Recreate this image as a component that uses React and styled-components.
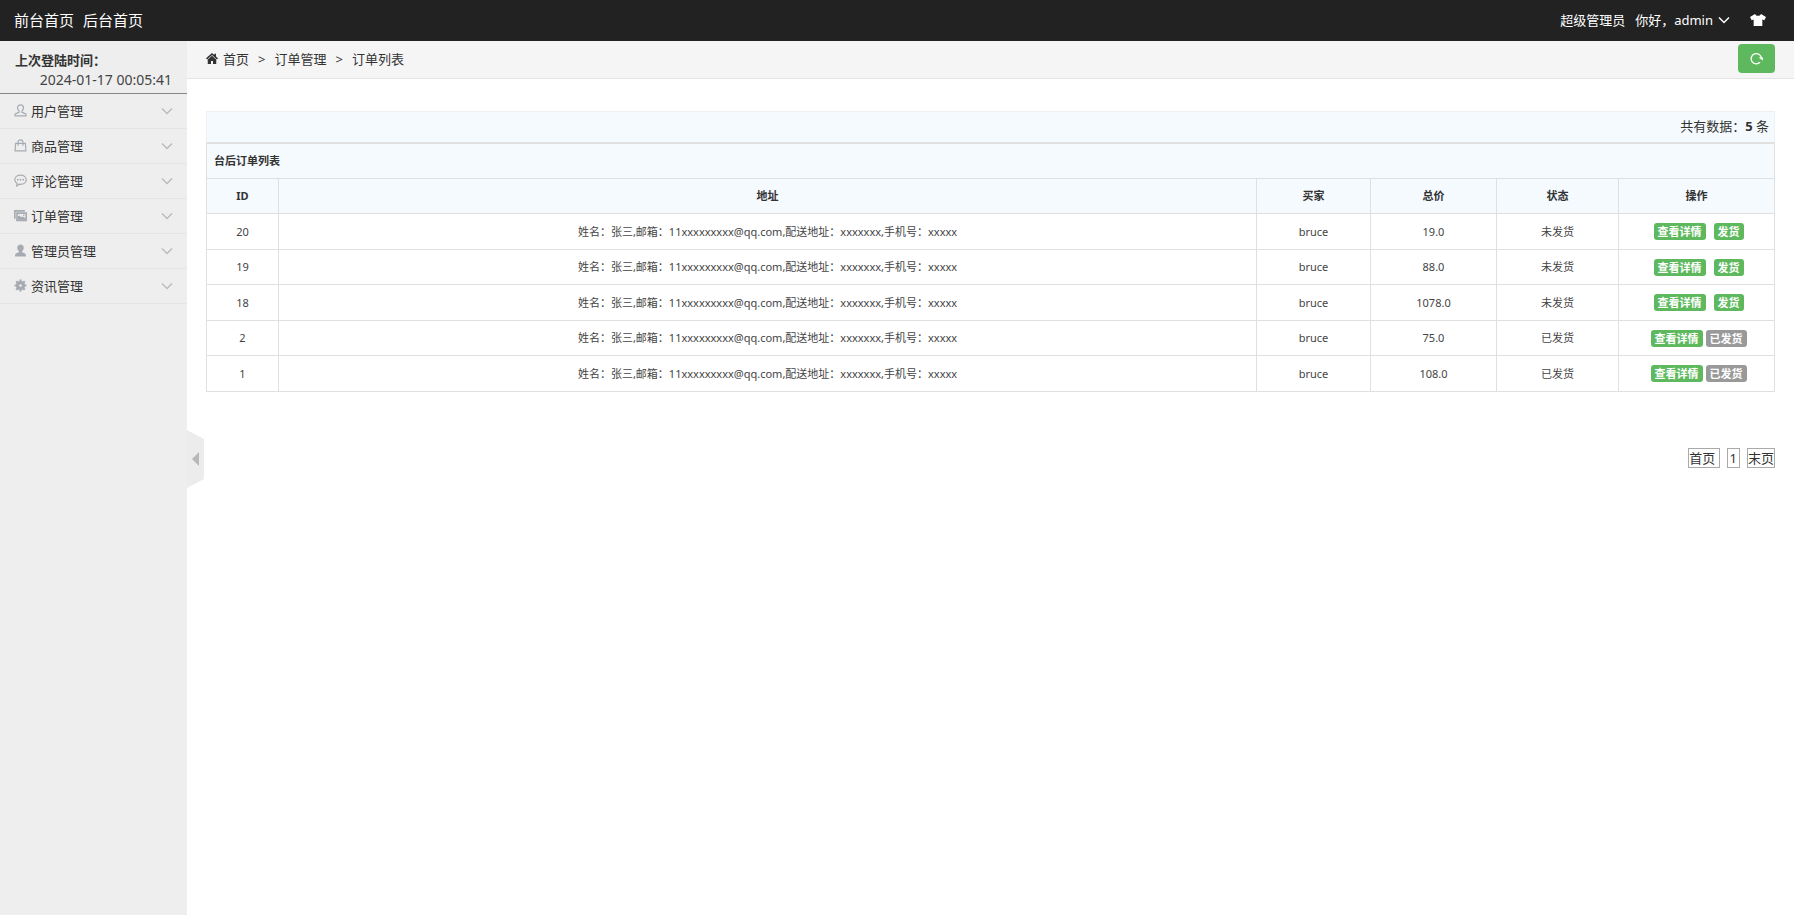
import React, { useState } from 'react'
import styled, { createGlobalStyle } from 'styled-components'

const menus = [
  { name: '用户管理', icon: 'user' },
  { name: '商品管理', icon: 'bag' },
  { name: '评论管理', icon: 'comment' },
  { name: '订单管理', icon: 'picture' },
  { name: '管理员管理', icon: 'admin' },
  { name: '资讯管理', icon: 'gear' },
]

const address = '姓名：张三,邮箱：11xxxxxxxxx@qq.com,配送地址：xxxxxxx,手机号：xxxxx'

const orders = [
  { id: 20, buyer: 'bruce', total: '19.0', sent: false },
  { id: 19, buyer: 'bruce', total: '88.0', sent: false },
  { id: 18, buyer: 'bruce', total: '1078.0', sent: false },
  { id: 2, buyer: 'bruce', total: '75.0', sent: true },
  { id: 1, buyer: 'bruce', total: '108.0', sent: true },
]

const MenuIcon = ({ name }) => (
  <Icon viewBox="0 0 24 24" aria-hidden="true">
    {name === 'user' && (
      <path
        fill="none"
        stroke="currentColor"
        strokeWidth="2.200"
        d="M12 1.500c-3.400 0-5.500 2.300-5.500 5.500 0 2.600 1.200 4.600 2.800 5.800v2.700L2 18.500V22h20v-3.500l-7.300-3v-2.700c1.600-1.200 2.800-3.200 2.800-5.800 0-3.200-2.100-5.500-5.500-5.500z"
      />
    )}
    {name === 'bag' && (
      <g fill="none" stroke="currentColor" strokeWidth="2.200">
        <path d="M3 8h18l1 14H2z" />
        <path d="M7.500 12.500V6c0-3 2-4.500 4.500-4.500S16.500 3 16.500 6v6.500" />
      </g>
    )}
    {name === 'comment' && (
      <g>
        <path
          fill="none"
          stroke="currentColor"
          strokeWidth="2.200"
          d="M12 2C6 2 1.500 5.700 1.500 10.500c0 3 1.700 5.500 4.300 7L5 22l5-3.200c.7.1 1.300.2 2 .2 6 0 10.500-3.700 10.500-8.500S18 2 12 2z"
        />
        <circle cx="7" cy="10.500" r="1.600" fill="currentColor" />
        <circle cx="12" cy="10.500" r="1.600" fill="currentColor" />
        <circle cx="17" cy="10.500" r="1.600" fill="currentColor" />
      </g>
    )}
    {name === 'picture' && (
      <g>
        <path fill="none" stroke="currentColor" strokeWidth="3" d="M1.500 18V3.500H20" />
        <path fill="none" stroke="currentColor" strokeWidth="3" d="M5.500 7.500h17V21h-17z" />
        <path fill="currentColor" d="M7 20v-6l3-2 3.500 3 2.500-1 6 3v3z" />
        <circle cx="18" cy="11.500" r="1.500" fill="currentColor" />
      </g>
    )}
    {name === 'admin' && (
      <path
        fill="currentColor"
        d="M12 1C8.300 1 6 3.500 6 7c0 2.800 1.200 5 3 6.300v1.900c-3 .8-7 2.300-7 4.800v3h20v-3c0-2.500-4-4-7-4.800v-1.900c1.800-1.300 3-3.500 3-6.300 0-3.500-2.300-6-6-6z"
      />
    )}
    {name === 'gear' && (
      <g>
        <circle cx="12" cy="12" r="5.500" fill="none" stroke="currentColor" strokeWidth="6" />
        <path
          stroke="currentColor"
          strokeWidth="4"
          d="M12 1v5M12 18v5M1 12h5M18 12h5M4.200 4.200l3.600 3.600M16.200 16.200l3.600 3.600M4.200 19.800l3.600-3.600M16.200 7.800l3.600-3.600"
        />
      </g>
    )}
  </Icon>
)

const Chevron = () => (
  <ChevronIcon viewBox="0 0 12 12" aria-hidden="true">
    <path d="M1 3.500l5 5 5-5" fill="none" stroke="currentColor" strokeWidth="1.500" />
  </ChevronIcon>
)

const App = () => {
  const [open, setOpen] = useState(true)

  return (
    <Page>
      <GlobalStyle />
      <Header>
        <HeaderNav>
          <a href="#front">前台首页</a>
          <a href="#admin">后台首页</a>
        </HeaderNav>
        <HeaderUser>
          <span>超级管理员</span>
          <UserButton type="button">
            你好，admin
            <Chevron />
          </UserButton>
          <SkinButton type="button" aria-label="换肤">
            <svg viewBox="0 0 24 18" width="16" height="12" aria-hidden="true">
              <path
                fill="currentColor"
                d="M7.500 0C8.500 2 10 2.800 12 2.800S15.500 2 16.500 0L24 4.500l-2.500 5-3-1.300V18h-13V8.200l-3 1.300L0 4.500z"
              />
            </svg>
          </SkinButton>
        </HeaderUser>
      </Header>

      <Body>
        {open && (
          <Sidebar>
            <LastLogin>
              <strong>上次登陆时间：</strong>
              <time>2024-01-17 00:05:41</time>
            </LastLogin>
            {menus.map((menu) => (
              <MenuButton key={menu.name} type="button">
                <MenuIcon name={menu.icon} />
                <span>{menu.name}</span>
                <Chevron />
              </MenuButton>
            ))}
          </Sidebar>
        )}

        <Main>
          <Toggle type="button" aria-label="收起菜单" onClick={() => setOpen(!open)}>
            <svg viewBox="0 0 17 58" width="17" height="58" aria-hidden="true">
              <path d="M0 0l17 9v40L0 58z" fill="#ececec" />
              <path d="M12 22v14l-7-7z" fill="#b8b8b8" />
            </svg>
          </Toggle>

          <Breadcrumb>
            <HomeLink href="#home">
              <svg viewBox="0 0 24 22" width="12" height="11" aria-hidden="true">
                <path
                  fill="currentColor"
                  d="M12 0L0 10.500l2 2.300L12 4l10 8.800 2-2.300-4-3.500V1.500h-3.500V4zM12 5.500l-8.500 7.500v9H10v-6h4v6h6.500v-9z"
                />
              </svg>
              首页
            </HomeLink>
            <span>&gt;</span>
            <span>订单管理</span>
            <span>&gt;</span>
            <span>订单列表</span>
            <RefreshButton type="button" aria-label="刷新">
              <svg viewBox="0 0 24 24" width="13" height="13" aria-hidden="true">
                <path
                  d="M18.500 19A9.500 9.500 0 1 1 21 11"
                  fill="none"
                  stroke="currentColor"
                  strokeWidth="2.500"
                />
                <path d="M15.500 10H24v5.500z" fill="currentColor" />
              </svg>
            </RefreshButton>
          </Breadcrumb>

          <Content>
            <Summary>
              共有数据：<strong>5</strong> 条
            </Summary>
            <Table>
              <colgroup>
                <Col $width={72} />
                <col />
                <Col $width={114} />
                <Col $width={126} />
                <Col $width={122} />
                <Col $width={156} />
              </colgroup>
              <thead>
                <TitleRow>
                  <th colSpan="6">台后订单列表</th>
                </TitleRow>
                <tr>
                  <th>ID</th>
                  <th>地址</th>
                  <th>买家</th>
                  <th>总价</th>
                  <th>状态</th>
                  <th>操作</th>
                </tr>
              </thead>
              <tbody>
                {orders.map((order) => (
                  <tr key={order.id}>
                    <td>{order.id}</td>
                    <td>{address}</td>
                    <td>{order.buyer}</td>
                    <td>{order.total}</td>
                    <td>{order.sent ? '已发货' : '未发货'}</td>
                    <td>
                      <Actions $gap={order.sent ? 3 : 8}>
                        <Label as="a" href={`#order-${order.id}`}>查看详情</Label>
                        {order.sent ? (
                          <Label $muted>已发货</Label>
                        ) : (
                          <Label as="a" href={`#send-${order.id}`}>发货</Label>
                        )}
                      </Actions>
                    </td>
                  </tr>
                ))}
              </tbody>
            </Table>
            <Pagination>
              <a href="#first">首页&nbsp;</a>
              <a href="#1">1</a>
              <a href="#last">末页</a>
            </Pagination>
          </Content>
        </Main>
      </Body>
    </Page>
  )
}

export default App

const GlobalStyle = createGlobalStyle`
  * {
    box-sizing: border-box;
  }

  body {
    margin: 0;
    background: #fff;
    color: #333;
    font-family: "Noto Sans", "Noto Sans CJK SC", sans-serif;
    font-size: 13px;
    line-height: 20px;
  }

  a {
    color: inherit;
    text-decoration: none;
  }

  button {
    border: 0;
    padding: 0;
    background: none;
    color: inherit;
    font: inherit;
    cursor: pointer;
  }
`

const Page = styled.div`
  display: flex;
  flex-direction: column;
  min-height: 100vh;
`

const Header = styled.header`
  display: flex;
  align-items: center;
  justify-content: space-between;
  height: 41px;
  padding: 0 28px 2px 14px;
  background: #222;
  color: #fff;
`

const HeaderNav = styled.nav`
  display: flex;
  gap: 9px;
  font-size: 15px;
`

const HeaderUser = styled.div`
  display: flex;
  align-items: center;
  gap: 10px;
`

const UserButton = styled.button`
  display: flex;
  align-items: center;
  gap: 5px;
`

const SkinButton = styled.button`
  display: flex;
  margin-left: 10px;
`

const Body = styled.div`
  display: flex;
  flex: 1;
`

const Sidebar = styled.aside`
  flex: none;
  width: 187px;
  background: #eee;
`

const LastLogin = styled.div`
  display: flex;
  flex-direction: column;
  padding: 9px 15px 3px;
  border-bottom: 1px solid #888;

  time {
    align-self: flex-end;
    color: #444;
    font-size: 14px;
  }
`

const MenuButton = styled.button`
  display: flex;
  align-items: center;
  gap: 4px;
  width: 100%;
  height: 35px;
  padding: 0 14px 1px;
  border-bottom: 1px solid #e5e5e5;

  span {
    flex: 1;
    text-align: left;
  }

  svg {
    color: #a6abb2;
  }

  svg:last-child {
    color: #b9bbbe;
  }
`

const Icon = styled.svg`
  width: 13px;
  height: 13px;
`

const ChevronIcon = styled.svg`
  width: 12px;
  height: 12px;
`

const Main = styled.main`
  position: relative;
  flex: 1;
  min-width: 0;
`

/* tab hanging over the content at the sidebar's edge */
const Toggle = styled.button`
  position: absolute;
  top: calc(50% - 48px);
  left: 0;

  svg {
    display: block;
  }
`

const Breadcrumb = styled.nav`
  display: flex;
  align-items: center;
  gap: 9px;
  height: 38px;
  padding: 0 19px 2px;
  border-bottom: 1px solid #e5e5e5;
  background: #f5f5f5;
`

const HomeLink = styled.a`
  display: flex;
  align-items: center;
  gap: 5px;
`

const RefreshButton = styled.button`
  display: flex;
  align-items: center;
  justify-content: center;
  width: 37px;
  height: 29px;
  margin-left: auto;
  border-radius: 4px;
  background: #5eb95e;
  color: #fff;
`

const Content = styled.div`
  padding: 32px 19px 20px;
`

const Summary = styled.div`
  height: 32px;
  padding: 4px 5px;
  border: 1px solid #edf1f4;
  border-bottom-color: #e2e2e2;
  background: #f5fafe;
  text-align: right;
`

const Table = styled.table`
  width: 100%;
  border-collapse: collapse;
  table-layout: fixed;
  color: #444;
  font-size: 11px;
  line-height: 18px;
  text-align: center;

  tr {
    height: 35px;
  }

  tbody tr:nth-child(odd) {
    height: 36px;
  }

  th,
  td {
    padding: 0 7px;
    border: 1px solid #e0e0e0;
  }

  th {
    background: #f5fafe;
    color: #333;
  }
`

const Col = styled.col`
  width: ${(props) => props.$width}px;
`

const TitleRow = styled.tr`
  text-align: left;
`

const Actions = styled.div`
  display: flex;
  justify-content: center;
  gap: ${(props) => props.$gap}px;
  padding-left: 4px;
`

const Label = styled.span`
  height: 17px;
  padding: 0 4px;
  border-radius: 3px;
  background: ${(props) => (props.$muted ? '#999' : '#5eb95e')};
  color: #fff;
  font-weight: bold;
  line-height: 17px;
`

const Pagination = styled.nav`
  display: flex;
  justify-content: flex-end;
  gap: 7px;
  margin-top: 56px;

  a {
    border: 1px solid #aaa;
    line-height: 18px;
  }

  a:nth-child(2) {
    padding: 0 2px;
  }
`
